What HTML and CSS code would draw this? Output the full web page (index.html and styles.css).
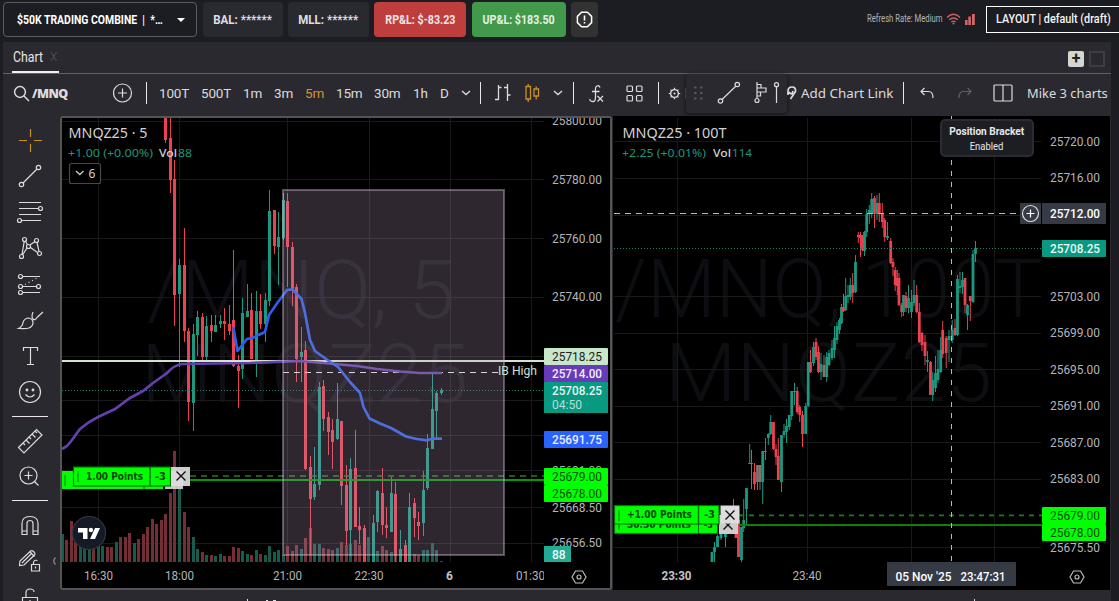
FILE: index.html
```html
<!DOCTYPE html>
<html lang="en">
<head>
<meta charset="utf-8">
<title>Trading charts</title>
<link rel="stylesheet" href="styles.css">
</head>
<body>
<header class="topbar">
  <div class="account"><span class="cond">$50K TRADING COMBINE&nbsp; |&nbsp; *…</span><i class="caret"></i></div>
  <div class="stat bal"><span class="cond">BAL: ******</span></div>
  <div class="stat mll"><span class="cond">MLL: ******</span></div>
  <div class="stat loss"><span class="cond">RP&amp;L: $-83.23</span></div>
  <div class="stat gain"><span class="cond">UP&amp;L: $183.50</span></div>
  <div class="stat alert"><svg width="17" height="17" viewBox="0 0 17 17"><path d="M5.6 1.2h5.8l4.2 4.2v6.2l-4.2 4.2H5.6l-4.2-4.2V5.4z" fill="none" stroke="#fff" stroke-width="1.5"/><path d="M8.5 4.5v5M8.5 11v1.6" stroke="#fff" stroke-width="1.6"/></svg></div>
  <div class="refresh"><span class="cond-sm">Refresh Rate: Medium</span></div>
  <svg class="signal" width="30" height="14" viewBox="0 0 30 14"><g fill="none" stroke="#c96263" stroke-width="1.4"><path d="M1 5.4Q7.5-.8 14 5.4M3.2 7.8q4.3-3.8 8.6 0M5.4 10q2.1-1.7 4.2 0"/></g><circle cx="7.5" cy="11.6" r="1" fill="#c96263"/><path d="M19 8h2.600v5H19zM22.300 4.500h2.600V13h-2.600zM26 2h2.800v11H26z" fill="#d46667"/></svg>
  <div class="layout-btn"><span class="cond-md">LAYOUT | default (draft)</span></div>
</header>
<main class="panel">
  <div class="tabs">
    <div class="tab"><span class="cond-tab">Chart</span><span class="tab-close">X</span></div>
    <div class="tab-actions"><span class="add">+</span><span class="square"></span></div>
  </div>
  <div class="toolbar">
    <div class="symbol"><svg width="17" height="17" viewBox="0 0 17 17"><circle cx="7" cy="7" r="5.4"/><path d="M11 11l5 5"/></svg><b>/MNQ</b></div>
    <svg class="plus" width="20" height="20" viewBox="0 0 20 20"><circle cx="9.500" cy="10" r="9"/><path d="M9.500 5.500v9M5 10h9"/></svg>
    <i class="div d1"></i>
    <span class="tf" style="width:42px">100T</span><span class="tf" style="width:42px">500T</span><span class="tf" style="width:31px">1m</span><span class="tf" style="width:31px">3m</span><span class="tf on" style="width:31px">5m</span><span class="tf" style="width:38px">15m</span><span class="tf" style="width:39px">30m</span><span class="tf" style="width:27px">1h</span><span class="tf" style="width:21px">D</span>
    <svg class="chev" width="10" height="6" viewBox="0 0 10 6"><path d="M1 1l4 3.6L9 1"/></svg>
    <i class="div d2"></i>
    <svg class="bars" width="18" height="20" viewBox="0 0 18 20"><path d="M4.5 2v15M4.5 4.5h3M1 16.500h3.500M13.500 1v17M13.500 12h3M10 4.500h3.500" stroke-width="1.3"/></svg>
    <svg class="candles" width="15" height="20" viewBox="0 0 15 20"><path d="M1 3.500h4.500v12.500H1zM3.200 1v2.500M3.200 16v3M9 6h4.500v7H9zM11.200 3.500V6M11.200 13v3.500"/></svg>
    <svg class="chev c2" width="10" height="6" viewBox="0 0 10 6"><path d="M1 1l4 3.6L9 1"/></svg>
    <i class="div d3"></i>
    <svg class="fx" width="16" height="19" viewBox="0 0 16 19"><path d="M11 3.500q-1-2.500-3-1.500t-1.500 5v6q0 5-3 4.500T1 15M3 7.500h7.500M8.500 12l5.500 5.500M14 12l-5.500 5.500" stroke-width="1.300"/></svg>
    <svg class="grid" width="17" height="17" viewBox="0 0 17 17"><rect x="1" y="1" width="5.500" height="5.500" rx="1"/><rect x="10.500" y="1" width="5.500" height="5.500" rx="1"/><rect x="1" y="10.500" width="5.500" height="5.500" rx="1"/><rect x="10.500" y="10.500" width="5.500" height="5.500" rx="1"/></svg>
    <i class="div d4"></i>
    <svg class="gear" width="13" height="13" viewBox="0 0 13 13"><circle cx="6.500" cy="6.500" r="3.900" stroke-width="1.400"/><circle cx="6.500" cy="6.500" r="1" fill="#ddd" stroke="none"/><path d="M6.500 .8v2M6.500 10.200v2M.8 6.500h2M10.200 6.500h2M2.600 2.600l1.200 1.200M9.200 9.200l1.200 1.200M2.600 10.400l1.200-1.200M9.200 3.800l1.200-1.200"/></svg>
    <i class="sliver"></i>
    <div class="float"><svg width="100" height="38" viewBox="686 74 100 38"><path d="M694 86.500h2.500v2H694zM700 86.500h2.500v2H700zM694 92h2.500v2H694zM700 92h2.500v2H700zM694 97.500h2.500v2H694zM700 97.500h2.500v2H700z" fill="#55555b" stroke="none"/><circle cx="720.500" cy="101" r="2.200"/><circle cx="737.300" cy="84.500" r="2.200"/><path d="M722 99.500l14-13.500M757 82v16M757 84.500h4v3.500h5v4h-5.500v4H757M757 88h4M757 92h4M776.500 87v16"/><circle cx="757" cy="100.500" r="2"/><circle cx="776.500" cy="84.700" r="2"/></svg></div>
    <svg class="clip" width="10" height="16" viewBox="0 0 10 16"><path d="M1 10V6q0-4 4-4t3.500 4.500L3.500 14M2 7q3 4 4-1" stroke-width="1.700"/></svg>
    <span class="link">Add Chart Link</span>
    <i class="div d5"></i>
    <svg class="undo" width="14" height="12" viewBox="0 0 14 12"><path d="M4.500 1L1 4.500 4.500 8M1 4.500h7.500q4.500 0 4.500 6.500"/></svg>
    <svg class="redo" width="14" height="12" viewBox="0 0 14 12"><path d="M9.500 1L13 4.500 9.500 8M13 4.500H5.500Q1 4.500 1 11"/></svg>
    <svg class="split" width="20" height="18" viewBox="0 0 20 18"><rect x="1" y="1" width="18" height="16" rx="1"/><path d="M10 1v16"/></svg>
    <span class="mike">Mike 3 charts</span>
  </div>
  <div class="body">
    <nav class="rail">
      <svg viewBox="2 123 56 36"><path d="M30.500 129v8M30.500 144v8M19 140.500h8M34 140.500h8" stroke="#cf8f20"/></svg>
      <svg viewBox="2 159 56 36"><circle cx="21.500" cy="184.500" r="2.200"/><circle cx="38.500" cy="167.500" r="2.200"/><path d="M23 183l14-14"/></svg>
      <svg viewBox="2 195 56 36"><path d="M19 202.500h22M19 208.500h19M19 214.500h22M22 220.500h19"/><circle cx="40.500" cy="208.500" r="2"/><circle cx="19.500" cy="220.500" r="2"/></svg>
      <svg viewBox="2 231 56 36"><g><circle cx="24.500" cy="239.500" r="2"/><circle cx="36.500" cy="240.500" r="2"/><circle cx="28.500" cy="246.500" r="2"/><circle cx="21.500" cy="256.500" r="2"/><circle cx="39.500" cy="253.500" r="2"/></g><path d="M24.200 241.500l-2.200 13M25.500 241l2 4M30 245l5-3.500M37 242.500l2 9M30.500 247.500l7 5M27 248l-4.500 7"/></svg>
      <svg viewBox="2 267 56 36"><circle cx="20.500" cy="276.500" r="2"/><circle cx="20.500" cy="286.500" r="2"/><circle cx="38.500" cy="286.500" r="2"/><circle cx="20.500" cy="292.500" r="2"/><path d="M23 276.500h17M23 286.500h13M23 292.500h17"/><path d="M25 284.500l13-7" stroke-dasharray="1 3"/></svg>
      <svg viewBox="2 303 56 36"><path d="M18.500 328.500q4-2 4.500-6 1.500-4.500 6-4.500 4 1 4 5 0 3-4 5-3 1-10.500.500zM33 312q-2 5 0 7t4-1.500l6-5.500"/></svg>
      <svg viewBox="2 339 56 36"><path d="M23.500 351v-3.500h14v3.500M30.500 347.500v17M27 364.500h7"/></svg>
      <svg viewBox="2 375 56 36"><circle cx="30" cy="392" r="10.500"/><path d="M25.500 394.500q4.500 5 9 0"/><circle cx="27" cy="390" r=".8" fill="#ddd"/><circle cx="33" cy="390" r=".8" fill="#ddd"/></svg>
      <i></i>
      <svg viewBox="2 423 56 36"><path d="M18.500 447.500l18-18 5.500 5.500-18 18zM23 443l2 2M26 440l3.500 3.500M29 437l2 2M32 434l3.500 3.500M35 431l2 2"/></svg>
      <svg viewBox="2 459 56 36"><circle cx="28.500" cy="475.500" r="8.500"/><path d="M34.500 481.500l4 4M28.500 471.500v8M24.500 475.500h8"/></svg>
      <i></i>
      <svg viewBox="2 507 56 36"><path d="M22 534.500v-11q0-7 8-7t8 7v11h-5v-11q0-3-3-3t-3 3v11zM22 531h5M33 531h5"/></svg>
      <svg viewBox="2 543 56 36"><path d="M19.500 565.500l.500-4.500 10.500-10q1.500-1 3 .500l1 1q1 1.500 0 2.500l-10.500 10zM22 563l10-10M30 552l4.500 4.500M31.500 564.500h8v6.500h-8zM33.500 564.500v-2q.5-3 4-2"/><path d="M35.500 566.500v2"/><path d="M55.500 557.500q-3.500 3.500 0 7" stroke="#8c8c90"/></svg>
      <svg viewBox="2 579 56 36"><path d="M22.500 597.500h15v8h-15zM26 597v-4q0-4 4-4t4 3M30 600v3"/></svg>
    </nav>
    <svg class="chart left" id="left" width="552" height="474" viewBox="60 116 552 474"></svg>
    <svg class="chart right" id="right" width="497" height="474" viewBox="613 116 497 474"></svg>
    <div class="tip"><b>Position Bracket</b><span>Enabled</span></div>
  </div>
  <svg class="foot" width="1107" height="11" viewBox="3 590 1107 11"><path d="M247 599h1v2h-1zM266 600h2v1h-2zM273 600h3v1h-3zM974 599h1v2h-1z" fill="#ddd"/></svg>
</main>
<script src="charts.js"></script>
</body>
</html>
```
FILE: styles.css
```css
* { box-sizing: border-box; }
body { margin: 0; width: 1119px; height: 601px; overflow: hidden; background: #1c1d22; color: #e2e2e4; font-family: Roboto, "Liberation Sans", sans-serif; }
svg { flex: none; fill: none; stroke: #dcdcde; stroke-width: 1.2; }
.topbar { height: 42px; display: flex; align-items: flex-start; padding: 2px 0 0 3px; font-size: 12px; font-weight: 700; white-space: nowrap; }
.topbar > * { flex: none; }
.account, .stat { height: 35px; border-radius: 4px; display: flex; align-items: center; justify-content: center; }
.account { width: 194px; border: 1px solid #5b5c60; justify-content: flex-start; padding-left: 13px; position: relative; }
.account .cond { color: #fff; transform: scaleX(.87); transform-origin: left; }
.caret { position: absolute; right: 11px; top: 15px; border: 4px solid transparent; border-top-color: #fff; border-bottom: 0; }
.cond { transform: scaleX(.89); }
.stat { background: #292a2f; color: #dfdfe2; margin-left: 6px; }
.bal { width: 80px; }
.mll { width: 81px; margin-left: 5px; }
.bal .cond, .mll .cond { transform: scaleX(.96); }
.loss { width: 92px; background: #bd3e3d; color: #f2e4e4; margin-left: 5px; }
.gain { width: 94px; background: #43994b; color: #e2f2e3; margin-left: 6px; }
.alert { width: 27px; background: #323232; margin-left: 5px; }
.refresh { width: 75px; margin-left: 269px; margin-top: 11px; font-size: 10px; font-weight: 400; color: #b4b4b8; }
.cond-sm { display: inline-block; transform: scaleX(.77); transform-origin: left; }
.signal { margin: 10px 0 0 4px; stroke: none; }
.layout-btn { width: 140px; height: 27px; margin: 4px 0 0 10px; border: 1px solid #fff; padding: 5px 0 0 9px; color: #f4f4f4; font-weight: 500; }
.cond-md { display: inline-block; transform: scaleX(.9); transform-origin: left; }
.panel { margin-left: 3px; width: 1108px; height: 559px; background: #2a292f; overflow: hidden; }
.tabs { height: 32px; border-bottom: 1px solid #606065; display: flex; justify-content: space-between; padding-left: 9px; }
.tab { width: 47px; height: 31px; border-bottom: 2px solid #f3eef3; font-size: 14px; padding: 7px 0 0 1px; display: flex; color: #e6e6e8; }
.cond-tab { transform: scaleX(.88); transform-origin: left; width: 37px; }
.tab-close { font-size: 12px; color: #48484d; padding-top: 1px; }
.tab-actions { display: flex; gap: 5px; padding: 9px 6px 0 0; }
.add, .square { width: 16px; height: 16px; }
.add { background: #d6d6d0; color: #222; border-radius: 2px; font: 700 16px/15px Roboto, sans-serif; text-align: center; }
.square { border: 2px solid #3d3d42; }
.toolbar { height: 42px; display: flex; align-items: center; padding: 0 0 4px 10px; font-size: 13.500px; color: #dcdcde; white-space: nowrap; }
.toolbar > * { flex: none; }
.symbol { width: 100px; display: flex; align-items: center; gap: 2px; font: 700 12.500px "Open Sans", sans-serif; letter-spacing: -.6px; }
.symbol svg { stroke-width: 1.5; }
.div { width: 1px; height: 22px; background: #e8e8ea; }
.d1 { margin: 0 12px 0 13px; }
.tf { letter-spacing: -.2px; }
.on { color: #d8932b; }
.chev { stroke-width: 1.300; }
.d2 { margin-left: 9px; }
.bars { margin-left: 13px; }
.candles { margin-left: 13px; stroke: #cf8f20; stroke-width: 1.3; }
.c2 { margin-left: 13px; }
.d3 { margin-left: 10px; }
.fx { margin-left: 15px; }
.grid { margin-left: 21px; }
.d4 { margin-left: 15px; }
.gear { margin-left: 9px; }
.sliver { width: 1px; height: 11px; margin-left: 4px; background: #506070; }
.float { width: 101px; height: 39px; border-radius: 4px; background: #29292f; box-shadow: 0 1px 4px #111; align-self: flex-start; }
.link { margin-left: 4px; width: 102px; font: 13.400px "Noto Sans", sans-serif; }
.undo { margin-left: 16px; }
.redo { margin-left: 24px; stroke: #606066; }
.split { margin-left: 21px; }
.mike { margin-left: 14px; font: 12.900px "Noto Sans", sans-serif; }
.body { height: 474px; display: flex; position: relative; }
.rail { width: 57px; height: 485px; padding-top: 7px; display: flex; flex-direction: column; flex: none; }
.rail svg { width: 56px; height: 36px; margin-left: -1px; }
.rail i { width: 36px; height: 1px; margin: 5px 0 6px 9px; background: #efe6ef; flex: none; }
.chart, .chart svg { stroke: none; }
.chart { background: #000; display: block; }
.right { margin-left: 1px; }
.tip { position: absolute; left: 937px; top: 3px; width: 94px; height: 38px; background: #1d1e24; border: 2px solid #2b2c32; border-radius: 5px; font-size: 11px; line-height: 15px; padding-top: 3px; display: flex; flex-direction: column; align-items: center; color: #e8e8ea; white-space: nowrap; }
.tip b { transform: scaleX(.92); }
.tip span { transform: scaleX(.86); }
.foot { display: block; stroke: none; }
```
FILE: charts.js
```js
const GREEN = '#1b9880', RED = '#ea4250';
const rect = (x, y, w, h, f, extra = '') => `<rect x="${x}" y="${y}" width="${w}" height="${h}" fill="${f}" ${extra}/>`;
const line = (x1, y1, x2, y2, c, w = 1, dash = '') => `<path d="M${x1} ${y1}L${x2} ${y2}" stroke="${c}" stroke-width="${w}" stroke-dasharray="${dash}" fill="none"/>`;
const text = (x, y, s, fill = '#b4b4b8', size = 12, len = 0, weight = 400, font = 'Roboto', anchor = 'start') =>
  `<text x="${x}" y="${y}" fill="${fill}" font-size="${size}" font-weight="${weight}" font-family="${font}, sans-serif" text-anchor="${anchor}" xml:space="preserve" ${len ? `textLength="${len}" lengthAdjust="spacingAndGlyphs"` : ''}>${s}</text>`;
const candle = (x, c, hi, top, bot, lo, w) => {
  const f = c === 'g' ? GREEN : c === 'r' ? RED : '#85706a';
  return rect(x - .5, hi, 1, lo - hi, f) + rect(x - w / 2, top, w, Math.max(1, bot - top), f);
};
const grid = (xs, ys, x0, x1) => xs.map(x => rect(x, 118, 1, 444, '#19191a')).join('') + ys.map(y => rect(x0, y, x1 - x0, 1, '#19191a')).join('');
const tag = (x, y, h, bg, fg, s, w = 64, weight = 400) => rect(x, y, w, h, bg, 'rx="1"') + text(x + 8, y + 13, s, fg, 12, 50, weight);
const gear = (x, y) => `<path d="M${x - 7} ${y}l3.500-6h7l3.500 6-3.500 6h-7z" fill="none" stroke="#bbb" stroke-width="1.200"/><circle cx="${x}" cy="${y}" r="2" fill="none" stroke="#bbb" stroke-width="1.200"/>`;
const cross = (x, y) => `<path d="M${x - 4.500} ${y - 4.500}l9 9M${x + 4.500} ${y - 4.500}l-9 9" stroke="#111" stroke-width="1.400"/>`;
const VERD = "'DejaVu Sans'";

const leftBars = [[-3,'r',118,118,140,143],[-2,'r',118,138,180,193],[-1,'r',160,179,295,326],[0,'g',259,265,294,367],[1,'r',228,265,331,342],[2,'r',328,331,402,421],[3,'g',324,334,403,431],[4,'g',311,317,335,356],[5,'r',313,317,357,361],[6,'g',316,326,357,361],[7,'r',315,325,331,342],[8,'g',315,325,332,332],[9,'g',315,321,324,328],[10,'r',308,321,324,340],[11,'r',305,324,331,335],[12,'r',250,320,366,367],[13,'r',355,366,371,408],[14,'g',298,313,369,379],[15,'g',284,311,317,317],[16,'r',293,310,359,359],[17,'g',291,311,360,377],[18,'r',294,311,324,329],[19,'g',293,300,324,342],[20,'g',190,211,301,306],[21,'r',210,210,246,254],[22,'g',212,237,247,285],[23,'g',193,200,238,240],[24,'r',193,201,247,287],[25,'r',242,247,290,306],[26,'r',284,287,359,382],[27,'g',327,352,357,382],[28,'r',341,350,469,470],[29,'r',456,467,499,555],[30,'g',447,484,497,500],[31,'g',382,387,485,490],[32,'r',380,386,419,431],[33,'r',412,417,432,455],[34,'r',419,430,442,469],[35,'g',383,419,439,440],[36,'r',421,421,486,505],[37,'r',465,485,531,545],[38,'g',458,469,530,556],[39,'r',430,468,527,527],[40,'r',507,526,530,544],[41,'r',525,528,562,562],[43,'g',515,523,562,562],[44,'g',490,491,522,532],[45,'r',468,493,525,535],[46,'r',507,525,528,538],[47,'g',477,493,532,532],[48,'r',482,494,556,562],[49,'g',530,549,562,562],[50,'r',540,545,562,562],[51,'g',493,507,562,562],[52,'r',498,503,518,537],[53,'r',512,522,526,540],[54,'g',471,490,523,536],[55,'g',434,448,488,490],[56,'g',374,409,449,449],[57,'g',391,393,411,438],[58,'g',388,390,393,395]];
// One token per bar: direction and the y of the bar's top.
const volumes = 'g534 r540 r521 r525 g542 g544 g541 r545 g543 g546 r547 r547 g542 r537 r537 r533 g543 r539 r534 r527 r519 r524 r520 r514 r493 r451 g487 r512 r527 g537 g549 r552 g555 r555 g556 g554 r556 r556 r547 r548 g551 g554 r555 g550 r554 g555 g546 g552 g550 g555 r546 r551 r545 g549 r538 r528 g544 g544 r548 r549 r550 g548 r542 r545 g544 r540 r545 r537 g537 g542 g551 r546 r550 g552 r550 g550 r549 g550 r554 r555 g550 g550 g543 g550 g561'.split(' ');
const bx = i => 179.5 + Math.round(i * 4.510);

let s = rect(60, 116, 552, 474, '#000');
s += text(147, 318, '/MNQ, 5', '#0d0f14', 82, 308, 300);
s += text(141, 402, 'MNQZ25', '#0d0f14', 82, 327, 300);
s += grid([98, 179, 287, 369, 450, 531], [121, 179, 238, 297, 356, 400, 435, 470, 507, 543], 62, 544);
volumes.forEach((v, i) => { const y = +v.slice(1); s += rect(bx(i - 26) - 1.5, y, 3, 562 - y, v[0] === 'g' ? '#175a4e' : '#752e35'); });
leftBars.forEach(([i, ...r]) => { s += candle(bx(i), ...r, 3); });
s += rect(62, 360, 482, 2, '#d2e3d2');
s += line(62, 390.5, 544, 390.5, '#267a6c', 1, '1 2');
s += line(190, 476, 544, 476, '#20801b', 1.700, '6 5') + rect(190, 479, 354, 2, '#07950a');
s += line(283, 372.500, 498, 372.500, '#e4e4e4', 1, '6 5');
s += '<path d="M62 449L67 446 72 440 80 429Q88 422 98 417L115 409 130 398 143 391 153 383 167 373Q174 365 182 364L250 363 300 361 323 363 357 366 377 369 400 371.500 420 373 442 373" fill="none" stroke="#6440ad" stroke-width="2.700"/>';
s += '<path d="M233.300 327L237.500 351 247 339 252 338 265 332 269 315 278 302 287 290 292.500 289.300 301.500 299 305 313 310 340 315 351 326 359 338 367 350 382 360 393 363.500 407 369.500 418.500 380 423.500 391 428 406 436.500 417 439 427 440.300 432 438.700 442 438.700" fill="none" stroke="#2b5fe8" stroke-width="2.700" stroke-linejoin="round"/>';
s += rect(283, 190, 221, 365, '#bc9cbd', 'fill-opacity=".25" stroke="#d8c4dc" stroke-opacity=".4" stroke-width="2"');
s += text(498, 375, 'IB High', '#cfe0cf', 12, 39);
s += text(68.500, 138, 'MNQZ25 · 5', '#d2d2d4', 14.500, 79, 400, "'Noto Sans'");
s += text(68, 157, '+1.00 (+0.00%)', '#1d957e', 11.500, 85, 400, "'Noto Sans'");
s += text(159, 157, 'Vol', '#d0d0d4', 11.500, 18, 500, "'Noto Sans'") + text(178, 157, '88', '#1d957e', 11.500, 14, 400, "'Noto Sans'");
s += rect(69.500, 163.500, 31, 20, '#000', 'rx="2" stroke="#48484b"') + '<path d="M76 171l3.800 3.500L83.500 171" fill="none" stroke="#ccc" stroke-width="1.300"/>' + text(88.500, 178, '6', '#d0d0d4', 12, 0, 400, "'Noto Sans'");
// Position labels
s += rect(62, 471, 101, 18, '#00ff00') + line(65, 475, 65, 486, '#087108') + rect(165, 471, 18, 18, '#ddd', 'fill-opacity=".9"') + line(144, 486, 144, 489, '#087108') + rect(73.500, 467, 97, 19, '#00ff00', 'stroke="#087108"') + line(78, 471, 78, 482, '#087108') + line(150, 467, 150, 486, '#087108', 1.500);
s += text(86, 479.500, '1.00 Points', '#074307', 10, 57, 700, VERD) + text(155, 479.500, '-3', '#074307', 10, 11, 700, VERD);
s += rect(171, 467, 19, 19, '#ddd', 'fill-opacity=".93"') + cross(181, 476);
s += '<circle cx="89" cy="533" r="16.500" fill="#151a27" stroke="#35373d"/><path d="M78 528h9.500v11h-4.500v-6.500H78zM95 528h5l-5 11h-5zM88.700 530a2.200 2.200 0 1 0 4.400 0 2.200 2.200 0 1 0-4.400 0" fill="#fff"/>';
// Price and time axes
[[125,'25800.00'],[184,'25780.00'],[243,'25760.00'],[301,'25740.00'],[475,'25681.00'],[512,'25668.50'],[547,'25656.50']].forEach(([y, t]) => s += text(552, y, t, '#b4b4b8', 12, 50));
s += tag(544, 348, 17, '#c8e6c9', '#1d211d', '25718.25') + tag(544, 365, 17, '#673ab7', '#f0eef5', '25714.00', 64, 500) + rect(544, 382, 64, 31, '#089981') + text(552, 395, '25708.25', '#e8f5f2', 12, 50, 500) + text(552, 409, '04:50', '#b9ddd6', 12, 30);
s += tag(544, 431, 17, '#2962ff', '#eef', '25691.75', 64, 500) + tag(544, 468, 17, '#00ff00', '#064a06', '25679.00') + tag(544, 485, 17, '#00ff00', '#064a06', '25678.00') + rect(544, 546, 27, 16, '#22ab94') + text(552, 559, '88', '#eefaf8', 12, 0, 500);
[[98.500,'16:30'],[179.500,'18:00'],[287.500,'21:00'],[369,'22:30']].forEach(([x, t]) => s += text(x - 14.500, 580, t, '#b4b4b8', 12, 29));
s += text(446, 580, '6', '#c0c0c4', 12, 0, 700) + `<svg x="510" y="565" width="34" height="20" viewBox="510 565 34 20">${text(516, 580, '01:30', '#b4b4b8', 12, 29)}</svg>` + gear(579, 577);
s += rect(61, 117, 550, 472, 'none', 'stroke="#545457" stroke-width="2" rx="1"');
document.getElementById('left').innerHTML = s;

const rightBars = [[712,'g',552,552,562,562],[714.5,'g',542,547,552,562],[717.5,'g',535,536,547,547],[721,'g',530,532,538,540],[725.500,'g',520,525,537,547],[733.500,'g',499,510,525,530],[736,'r',525,527,538,538],[738.500,'r',510,520,557,557],[741.500,'g',527,527,560,562],[743.700,'g',499,520,528,532],[746.500,'g',488,488,509,524],[749.700,'g',444,463,464,464],[751.500,'r',450,463,464,489],[754.500,'r',463,472,484,490],[757.500,'x',465,465,482,490],[760,'x',465,465,482,490],[762.700,'g',451,451,482,504],[765.500,'g',438,451,452,460],[768.300,'g',433,434,438,445],[770.700,'g',415,422,434,435],[773.500,'r',422,422,449,450],[776,'r',444,449,457,465],[778.300,'r',438,456,480,480],[781.500,'g',435,435,482,492],[784,'g',424,431,435,438],[786.500,'g',419,426,432,443],[789.300,'g',415,415,427,430],[791.700,'g',391,391,416,420],[794.500,'g',383,391,392,405],[797.200,'r',387,391,412,414],[799.700,'r',405,407,415,422],[802.500,'r',411,415,434,447],[805.700,'g',403,406,434,434],[808.200,'g',362,362,406,407],[810.500,'r',350,362,372,373],[813.500,'g',342,347,363,366],[816,'r',338,342,357,360],[818.500,'r',346,352,372,373],[821,'g',353,364,372,380],[824,'x',355,365,377,377],[826.700,'g',352,357,377,382],[829,'g',350,353,365,366],[832,'g',340,348,358,360],[834.500,'g',326,338,350,358],[837,'g',322,326,340,344],[839.500,'g',318,320,330,334],[841.500,'g',304,307,323,324],[843.500,'r',294,307,311,312],[845.700,'g',278,296,310,311],[848,'g',285,295,297,303],[850.300,'g',278,285,297,300],[852.700,'r',273,285,293,303],[855.500,'g',255,262,292,293],[858.300,'r',232,235,237,243],[860.500,'r',232,235,238,257],[862.500,'r',235,237,250,251],[864.500,'g',231,232,251,256],[866.700,'g',209,214,232,237],[869.300,'g',205,210,214,224],[871.700,'g',193,199,214,218],[874.500,'r',196,198,214,228],[877,'g',195,203,214,220],[879.300,'r',193,203,213,222],[882.300,'r',203,214,222,228],[884.700,'r',218,220,237,242],[887.500,'g',222,236,238,240],[890.700,'r',238,241,263,264],[893,'r',258,262,267,276],[895.200,'r',267,270,285,291],[897.300,'r',270,278,286,295],[899,'r',273,278,305,306],[901.700,'r',303,305,312,317],[903.500,'g',295,295,312,316],[906,'r',292,296,308,312],[908.500,'g',285,298,308,313],[911.500,'g',290,302,312,318],[914,'g',280,295,303,306],[916.700,'r',285,295,312,313],[919.300,'r',303,312,342,343],[922,'r',332,333,345,351],[925,'r',335,342,356,365],[927.500,'g',351,360,362,372],[930.500,'r',361,362,395,395],[932.700,'g',372,380,395,401],[935.500,'g',356,373,388,392],[938,'g',350,369,380,383],[940.700,'g',337,350,372,373],[942.700,'r',321,330,354,358],[946.200,'r',336,338,353,368],[949,'g',330,336,340,362],[952.200,'g',320,330,340,343],[955,'r',319,328,335,336],[957.500,'g',275,279,335,336],[960,'g',272,286,288,293],[962.500,'g',272,280,287,294],[965,'r',278,278,305,313],[967.500,'g',304,305,315,330],[970.300,'r',296,296,301,321],[973,'g',250,254,302,303],[975.500,'g',241,248,254,262]];
let r = rect(613, 116, 497, 474, '#000');
r += text(615, 317, '/MNQ, 100T', '#0c0e12', 82, 427, 300) + text(665, 401, 'MNQZ25', '#0c0e12', 82, 327, 300);
r += grid([677, 807, 911, 994], [141, 178, 215, 296, 333, 369, 406, 442, 479, 547], 614, 1041);
rightBars.forEach(([x, ...b]) => { r += candle(x, ...b, 2.800); });
r += line(614, 248.500, 1041, 248.500, '#267a6c', 1, '1 2');
r += line(739, 515.300, 1042, 515.300, '#12830f', 1.700, '5 5') + rect(739, 524, 303, 2, '#078207');
r += line(614, 213.500, 1020, 213.500, '#b9b9bb', 1, '6 5') + line(951.500, 116, 951.500, 562, '#b9b9bb', 1, '5 6');
r += text(622.500, 137.500, 'MNQZ25 · 100T', '#d2d2d4', 14.500, 104, 400, "'Noto Sans'") + text(622, 157, '+2.25 (+0.01%)', '#1d957e', 11.500, 84, 400, "'Noto Sans'") + text(713, 157, 'Vol', '#d0d0d4', 11.500, 18, 500, "'Noto Sans'") + text(732, 157, '114', '#1d957e', 11.500, 20, 400, "'Noto Sans'");
r += rect(614.500, 515, 103, 18.500, '#00ff00', 'stroke="#087108"') + line(619, 519, 619, 530, '#087108') + line(698.500, 515, 698.500, 534, '#087108') + text(627, 528, '30.50 Points', '#074307', 10, 64, 700, VERD) + text(704, 528, '-3', '#074307', 10, 9, 700, VERD) + rect(719, 515, 19, 19, '#ccc') + cross(728, 525);
r += rect(614.500, 505.500, 104.500, 18.500, '#00ff00', 'stroke="#087108"') + line(619, 510, 619, 521, '#087108') + line(698.500, 505, 698.500, 524, '#087108', 1.500) + text(627, 518, '+1.00 Points', '#074307', 10, 65, 700, VERD) + text(704, 518, '-3', '#074307', 10, 11, 700, VERD) + rect(720.500, 505.500, 19, 18, '#ddd') + cross(730, 515);
[[146,'25720.00'],[182,'25716.00'],[301,'25703.00'],[337,'25699.00'],[374,'25695.00'],[410,'25691.00'],[447,'25687.00'],[483,'25683.00'],[552,'25675.50']].forEach(([y, t]) => r += text(1050, y, t, '#b4b4b8', 12, 50));
r += rect(1020, 203, 21, 21, '#363a45') + rect(1042, 203, 64, 21, '#363a45') + '<path d="M1030.500 209.500v8M1026.500 213.500h8" stroke="#fff"/><circle cx="1030.500" cy="213.500" r="8" fill="none" stroke="#ddd"/>' + text(1050, 218, '25712.00', '#fff', 12, 50, 500);
r += tag(1042, 240, 17, '#089981', '#eefaf8', '25708.25', 64, 500) + tag(1042, 507, 17, '#00ff00', '#064a06', '25679.00') + tag(1042, 524, 17, '#00ff00', '#064a06', '25678.00');
r += text(661.500, 580, '23:30', '#c4c4c8', 12, 30, 700) + text(792.500, 580, '23:40', '#b4b4b8', 12, 29);
r += rect(887, 562, 129, 24, '#363a45') + text(895.500, 581, "05 Nov '25", '#fff', 12, 56, 500) + text(960.500, 581, '23:47:31', '#fff', 12, 45, 500) + gear(1077, 577);
document.getElementById('right').innerHTML = r;
```
